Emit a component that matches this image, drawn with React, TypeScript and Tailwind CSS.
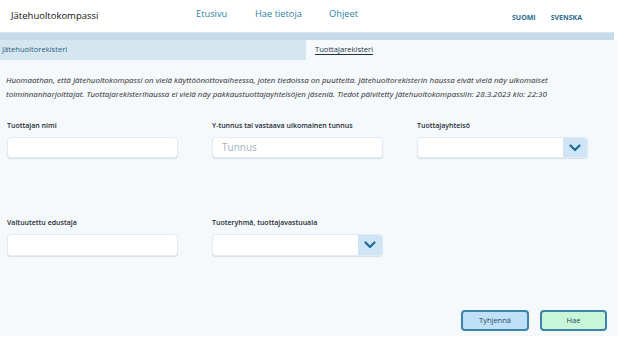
import { ReactNode } from "react";

const Field = ({ label, children }: { label: string; children: ReactNode }) => (
  <div className="flex flex-col">
    <label className="mb-[6px] text-[7px] font-semibold leading-[10px] text-[#1f2a33]">
      {label}
    </label>
    {children}
  </div>
);

const TextInput = ({ placeholder, h = "h-[21px]" }: { placeholder?: string; h?: string }) => (
  <div
    className={`flex ${h} items-center rounded-[4px] border border-[#e3ecf3] bg-white px-[9px] text-[10px] text-[#a3b3c2] shadow-[0_1px_1px_rgba(120,150,180,0.25)]`}
  >
    {placeholder}
  </div>
);

const Chevron = () => (
  <svg width="12" height="8" viewBox="0 0 12 8" fill="none">
    <path d="M1.5 1.5 6 6l4.5-4.5" stroke="#1d6f95" strokeWidth="2.2" strokeLinecap="round" strokeLinejoin="round" />
  </svg>
);

const Select = ({ h = "h-[21px]" }: { h?: string }) => (
  <div
    className={`flex ${h} overflow-hidden rounded-[4px] border border-[#e3ecf3] bg-white shadow-[0_1px_1px_rgba(120,150,180,0.25)]`}
  >
    <div className="flex-1" />
    <div className="flex w-[24px] items-center justify-center bg-[#cfe4f4]">
      <Chevron />
    </div>
  </div>
);

export default function App() {
  return (
    <div className="h-[342px] w-[624px] overflow-hidden bg-white font-['Open_Sans',sans-serif]">
      <header className="flex h-[32px] items-center">
        <div className="w-[196px] pl-[11px] text-[9.5px] text-[#111]">Jätehuoltokompassi</div>
        <nav className="flex w-[316px] text-[9.3px] text-[#2b7fa3]">
          <span className="mt-[-4px] w-[59px]">Etusivu</span>
          <span className="mt-[-4px] w-[74px]">Hae tietoja</span>
          <span className="mt-[-4px]">Ohjeet</span>
        </nav>
        <div className="mt-[4px] flex gap-[15px] text-[7px] font-bold text-[#2a6c93]">
          <span>SUOMI</span>
          <span>SVENSKA</span>
        </div>
      </header>

      <div className="h-[8px] w-[614px] border-t border-[#d8e6f0] bg-[#c5dbe9]" />

      <div className="w-[618px] bg-[#f5f9fc] pb-[5px]">
        <div className="flex h-[20px] text-[7.6px]">
          <div className="flex w-[306px] items-center bg-[#d6e6f1] pl-[2px] text-[#2a5f80]">
            Jätehuoltorekisteri
          </div>
          <div className="flex flex-1 items-center rounded-tr-[4px] pl-[9px] text-[#1f3340] underline underline-offset-2">
            Tuottajarekisteri
          </div>
        </div>

        <p className="mt-[13px] pl-[6px] pr-[40px] text-[8px] italic leading-[14px] text-[#2b2b2b]">
          Huomaathan, että Jätehuoltokompassi on vielä käyttöönottovaiheessa, joten tiedoissa on puutteita.
          Jätehuoltorekisterin haussa eivät vielä näy ulkomaiset toiminnanharjoittajat. Tuottajarekisterihaussa
          ei vielä näy pakkaustuottajayhteisöjen jäseniä. Tiedot päivitetty Jätehuoltokompassiin: 28.3.2023 klo: 22:30
        </p>

        <div className="mt-[20px] grid grid-cols-[171px_171px_171px] gap-x-[34px] gap-y-[60px] pl-[7px]">
          <Field label="Tuottajan nimi">
            <TextInput />
          </Field>
          <Field label="Y-tunnus tai vastaava ulkomainen tunnus">
            <TextInput placeholder="Tunnus" />
          </Field>
          <Field label="Tuottajayhteisö">
            <Select />
          </Field>
          <Field label="Valtuutettu edustaja">
            <TextInput h="h-[22px]" />
          </Field>
          <Field label="Tuoteryhmä, tuottajavastuuala">
            <Select h="h-[22px]" />
          </Field>
        </div>

        <div className="mt-[54px] flex justify-end gap-[11px] pr-[11px]">
          <button className="h-[21px] w-[68px] rounded-[4px] border-2 border-[#3d85a8] bg-[#c0e0f7] text-[7.5px] text-[#1f4a63]">
            Tyhjennä
          </button>
          <button className="h-[21px] w-[67px] rounded-[4px] border-2 border-[#3d85a8] bg-[#c8f6d6] text-[7.5px] text-[#1f4a63]">
            Hae
          </button>
        </div>
      </div>
    </div>
  );
}
